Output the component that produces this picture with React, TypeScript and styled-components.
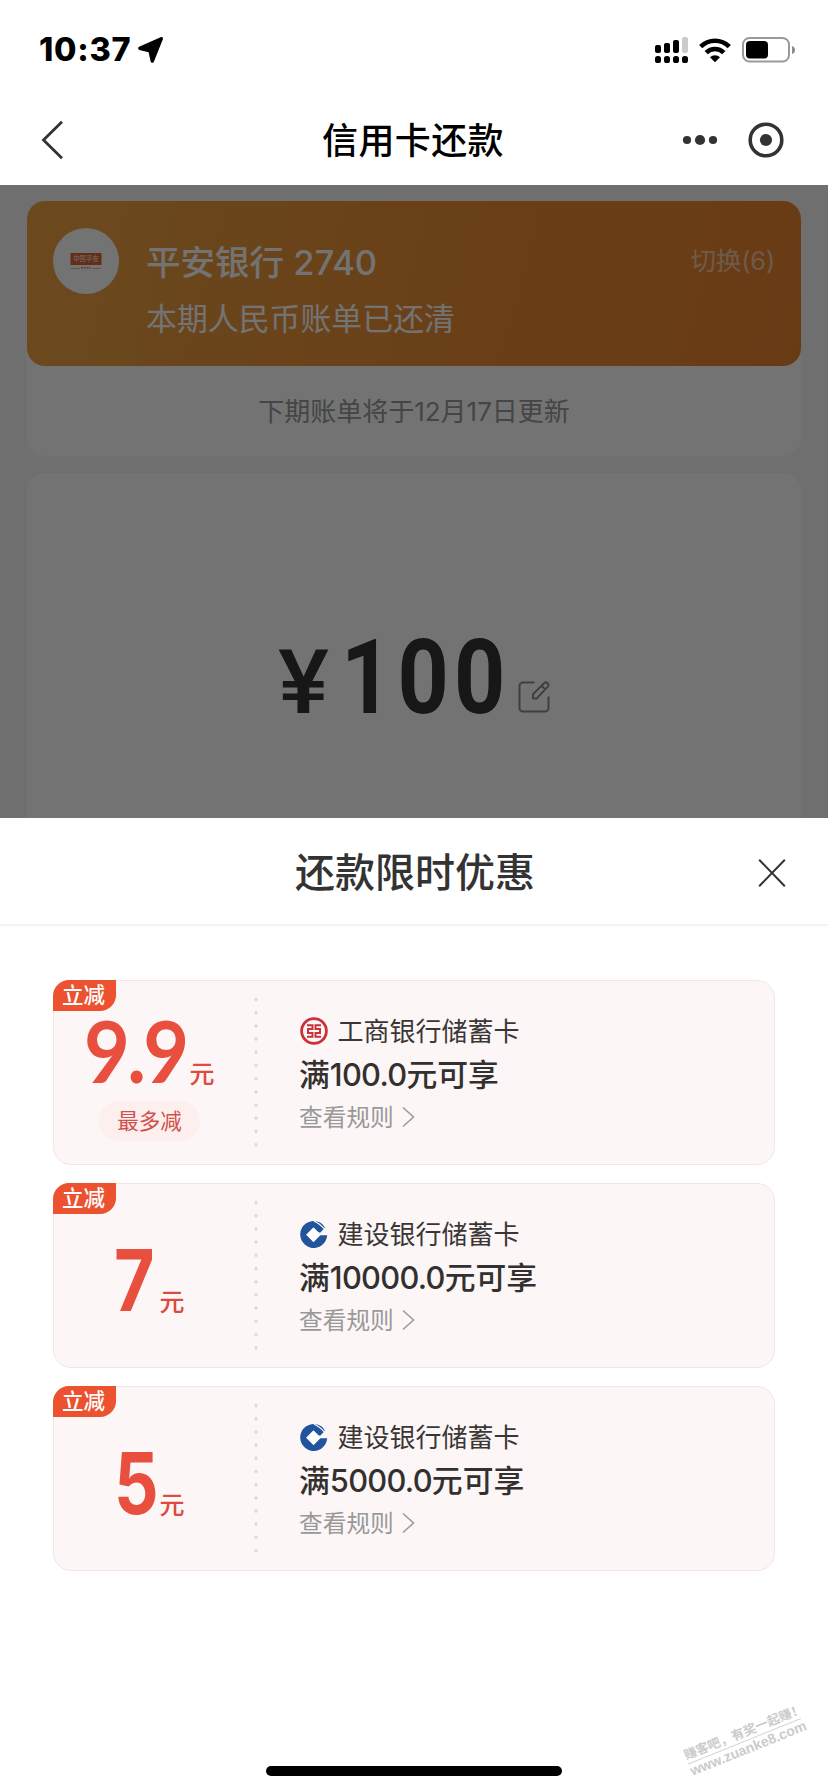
import React from 'react';
import styled, { createGlobalStyle } from 'styled-components';

const GlobalStyle = createGlobalStyle`
  * { box-sizing: border-box; }
  body {
    margin: 0;
    background: #fff;
    font-family: Inter, 'Noto Sans CJK SC', sans-serif;
    color: #333;
  }
`;

const Page = styled.div`
  position: relative;
  display: flex;
  flex-direction: column;
  width: 828px;
  height: 1792px;
  overflow: hidden;
  background: #fff;
`;

const StatusBar = styled.div`
  display: flex;
  align-items: center;
  height: 95px;
  padding: 5px 33px 0 39px;
  color: #000;
`;

const Clock = styled.span`
  width: 98px;
  font-size: 32.5px;
  font-weight: 780;
  line-height: 40px;
  letter-spacing: 0.7px;
  white-space: nowrap;
`;

const StatusIcons = styled.div`
  display: flex;
  align-items: center;
  gap: 11px;
  margin-left: auto;
`;

const NavBar = styled.div`
  display: grid;
  grid-template-columns: 1fr auto 1fr;
  align-items: center;
  height: 90px;
  padding: 0 44px 0 40px;
`;

const NavTitle = styled.h1`
  margin: 0;
  padding: 2px 0 0 2px;
  color: #000;
  font-size: 36px;
  font-weight: 500;
  line-height: 50px;
  letter-spacing: 0.4px;
`;

const NavActions = styled.div`
  display: flex;
  align-items: center;
  justify-content: flex-end;
  gap: 30px;
`;

const Backdrop = styled.div`
  position: relative;
  flex: none;
  height: 633px;
  padding: 16px 27px 0;
  overflow: hidden;
  background: #f5f5f5;
`;

const Mask = styled.div`
  position: absolute;
  inset: 0;
  background: rgba(0, 0, 0, 0.55);
`;

const BillCard = styled.div`
  height: 255px;
  border-radius: 18px;
  background: #fff;
`;

const BankPanel = styled.div`
  display: flex;
  height: 165px;
  padding: 27px 26px 0;
  border-radius: 18px;
  background: linear-gradient(105deg, #eea443 0%, #ea8f36 50%, #e98330 100%);
  color: #fff;
`;

const BankBadge = styled.div`
  display: flex;
  align-items: center;
  justify-content: center;
  width: 66px;
  height: 66px;
  margin-right: 27px;
  border-radius: 50%;
  background: #fff;
`;

const BankInfo = styled.div`
  display: flex;
  flex-direction: column;
`;

const BankName = styled.div`
  height: 60px;
  font-size: 34.5px;
  font-weight: 500;
  line-height: 69px;
  white-space: pre;
`;

const CardTail = styled.span`
  font-weight: 450;
`;

const BillStatus = styled.div`
  font-size: 30.9px;
  line-height: 61px;
`;

const SwitchLink = styled.div`
  margin-left: auto;
  font-size: 25.5px;
  line-height: 66px;
  letter-spacing: -0.2px;
  opacity: 0.55;
`;

const NextBill = styled.div`
  color: #999;
  font-size: 26px;
  line-height: 91px;
  text-align: center;
`;

const AmountCard = styled.div`
  display: flex;
  align-items: flex-start;
  justify-content: center;
  height: 420px;
  margin-top: 17px;
  padding-top: 155px;
  border-radius: 18px;
  background: #fff;
`;

const AmountLine = styled.div`
  display: flex;
  align-items: baseline;
  color: #333;
  font-family: Roboto, sans-serif;
  font-weight: 700;
  line-height: 100px;
`;

const Yen = styled.span`
  width: 63px;
  font-size: 89px;
  font-weight: 500;
  transform: scaleX(1.08);
  transform-origin: left;
`;

const Amount = styled.span`
  width: 177px;
  font-size: 104px;
  letter-spacing: 6px;
  transform: scaleX(0.86);
  transform-origin: left;
`;

const Sheet = styled.div`
  display: flex;
  flex-direction: column;
  flex: 1;
  background: #fff;
`;

const SheetHeader = styled.div`
  display: grid;
  grid-template-columns: 1fr auto 1fr;
  align-items: center;
  height: 108px;
  padding: 4px 42px 0 43px;
  border-bottom: 2px solid #f3f3f3;
`;

const SheetTitle = styled.h2`
  grid-column: 2;
  margin: 0;
  padding-left: 1px;
  font-size: 40px;
  font-weight: 500;
  line-height: 58px;
`;

const CloseSlot = styled.div`
  display: flex;
  justify-content: flex-end;
`;

const CouponList = styled.div`
  display: flex;
  flex-direction: column;
  gap: 18px;
  padding: 54px 53px 0;
`;

const Coupon = styled.div`
  position: relative;
  display: flex;
  height: 185px;
  border: 1px solid #f5e4e4;
  border-radius: 18px;
  background: #fcf6f6;
`;

const Tag = styled.div`
  position: absolute;
  top: -1px;
  left: -1px;
  width: 63px;
  height: 31px;
  padding-right: 2px;
  border-radius: 16px 0 16px 0;
  background: #ec5130;
  color: #fff;
  font-size: 21.5px;
  font-weight: 500;
  line-height: 31px;
  text-align: center;
`;

const Discount = styled.div`
  display: flex;
  flex-direction: column;
  align-items: center;
  width: 191px;
`;

const DiscountLine = styled.div<{ $top: number }>`
  display: flex;
  align-items: baseline;
  height: 62px;
  margin-top: ${(p) => p.$top}px;
  color: #e94f3f;
  line-height: 62px;
`;

const Figure = styled.span<{ $width: number; $decimal?: boolean }>`
  width: ${(p) => p.$width}px;
  font-family: ${(p) => (p.$decimal ? 'Lato' : 'Inter')}, sans-serif;
  font-size: ${(p) => (p.$decimal ? 86 : 85)}px;
  font-weight: 700;
  letter-spacing: ${(p) => (p.$decimal ? -3 : 0)}px;
  white-space: nowrap;

  span {
    display: inline-block;
    transform: scaleX(${(p) => (p.$decimal ? 0.92 : 0.82)});
    transform-origin: left;
  }
`;

const Unit = styled.span`
  color: #dc4a40;
  font-size: 25px;
  font-weight: 500;
`;

const Limit = styled.div`
  width: 101px;
  height: 40px;
  margin-top: 20px;
  border-radius: 20px;
  background: #fdefee;
  color: #d0504a;
  font-size: 21.5px;
  line-height: 41px;
  text-align: center;
`;

const Perforation = styled.div`
  align-self: center;
  width: 4px;
  height: 158.4px;
  margin-left: 9px;
  background: radial-gradient(circle at center, #ddd6d6 1.2px, transparent 2px) 0 0 / 4px 13.2px;
`;

const Details = styled.div`
  display: flex;
  flex-direction: column;
  margin-left: 41px;
  padding-top: 29px;
`;

const CardName = styled.div`
  display: flex;
  align-items: center;
  gap: 9.5px;
  height: 42px;
  padding-left: 1px;
  color: #3b3636;
  font-size: 26px;

  span {
    padding-bottom: 3px;
  }
`;

const Condition = styled.div`
  height: 45px;
  color: #333030;
  font-size: 30.8px;
  font-weight: 500;
  line-height: 46px;
`;

const Threshold = styled.span`
  letter-spacing: -0.7px;
`;

const Rules = styled.div`
  display: flex;
  align-items: center;
  gap: 8px;
  height: 40px;
  color: #999;
  font-size: 23.7px;

  span {
    padding-bottom: 2px;
  }
`;

const HomeIndicator = styled.div`
  position: absolute;
  bottom: 16px;
  left: 266px;
  width: 296px;
  height: 10px;
  border-radius: 5px;
  background: #000;
`;

const Watermark = styled.div`
  position: absolute;
  right: 23px;
  bottom: 35px;
  width: 122px;
  color: #cbcbcb;
  font-family: 'Liberation Sans', 'Noto Sans CJK SC', sans-serif;
  font-weight: 700;
  text-align: center;
  white-space: nowrap;
  transform: rotate(-22deg);
`;

const WatermarkTop = styled.div`
  border-bottom: 1px solid #d4d4d4;
  font-size: 12.8px;
  line-height: 17px;
`;

const WatermarkUrl = styled.div`
  font-size: 14px;
  line-height: 15px;
`;

const LocationIcon = () => (
  <svg width="28" height="28" viewBox="0 0 28 28">
    <path
      d="M24.3 2.7 2.8 12.4 13 14.9 15.3 25Z"
      fill="#000"
      stroke="#000"
      strokeWidth="3.4"
      strokeLinejoin="round"
    />
  </svg>
);

const SignalIcon = () => (
  <svg width="33" height="26" viewBox="0 0 33 26">
    <rect x="0" y="8" width="6" height="8" rx="2" />
    <rect x="9" y="6" width="6" height="10" rx="2" />
    <rect x="18" y="3" width="6" height="13" rx="2" />
    <rect x="27" y="0" width="6" height="16" rx="2" fill="#cbcbcb" />
    {[0, 9, 18, 27].map((x) => (
      <rect key={x} x={x} y="19" width="6" height="7" rx="2.6" />
    ))}
  </svg>
);

const WifiIcon = () => (
  <svg width="32" height="25" viewBox="0 0 32 25">
    <g fill="none" stroke="#000" strokeWidth="4.6">
      <path d="M1.7 8.6a20.3 20.3 0 0 1 28.6 0" />
      <path d="M7.2 14.6a12.5 12.5 0 0 1 17.6 0" />
    </g>
    <path d="M16 24.2 11 19.2a7.2 7.2 0 0 1 10 0Z" />
  </svg>
);

const BatteryIcon = () => (
  <svg width="53" height="26" viewBox="0 0 53 26">
    <rect x="1" y="1" width="46" height="23.5" rx="6.5" fill="none" stroke="#9a9a9a" strokeWidth="2" />
    <rect x="4" y="4" width="22" height="17.5" rx="4" />
    <path d="M50 9q3 1 3 4t-3 4Z" fill="#8c8c8c" />
  </svg>
);

const BackIcon = () => (
  <svg width="24" height="40" viewBox="0 0 24 40">
    <path d="M22 1.8 3.5 20 22 38.2" fill="none" stroke="#333" strokeWidth="2.8" />
  </svg>
);

const MoreIcon = () => (
  <svg width="36" height="12" viewBox="0 0 36 12" fill="#333">
    <circle cx="5" cy="6" r="4.1" />
    <circle cx="18" cy="6" r="5.1" />
    <circle cx="31" cy="6" r="4.1" />
  </svg>
);

const TargetIcon = () => (
  <svg width="36" height="36" viewBox="0 0 36 36">
    <circle cx="18" cy="18" r="15.8" fill="none" stroke="#333" strokeWidth="3.6" />
    <circle cx="18" cy="18" r="6.1" fill="#333" />
  </svg>
);

const PinganLogo = () => (
  <svg width="34" height="20" viewBox="0 0 34 20">
    <rect x="1.5" y="2" width="31" height="12" fill="#dc6433" />
    <text x="17" y="10.4" textAnchor="middle" fontSize="6.4" fontWeight="700" fill="#f6cdb8">
      中国平安
    </text>
    <path d="M2 17.5h9m12 0h9" stroke="#eba68c" strokeWidth="0.8" />
    <path d="M12 16.8h10" stroke="#dd8a70" strokeWidth="1.4" strokeDasharray="2 0.8" />
  </svg>
);

const EditIcon = () => (
  <svg width="32" height="32" viewBox="0 0 32 32" fill="none" stroke="#8d8d8d" strokeWidth="2">
    <path d="M16.5 1.5H5A3.5 3.5 0 0 0 1.5 5v22A3.5 3.5 0 0 0 5 30.5h22a3.5 3.5 0 0 0 3.5-3.5V15.5" />
    <path d="M15 17.5v-4.2L26 2.3a2.5 2.5 0 0 1 3.6 3.6L18.6 17.5ZM23.5 4.8l3.6 3.6" strokeLinejoin="round" />
  </svg>
);

const CloseIcon = () => (
  <svg width="28" height="30" viewBox="0 0 28 30">
    <path d="M1.2 1.8 26.8 28.2M26.8 1.8 1.2 28.2" stroke="#333" strokeWidth="2" />
  </svg>
);

const IcbcLogo = () => (
  <svg width="28" height="28" viewBox="0 0 28 28" fill="none" stroke="#c8323a">
    <circle cx="14" cy="14" r="12.4" strokeWidth="2.8" />
    <path
      d="M7 8.3H12.5V12H8V16H12.5V19.7H7M21 8.3H15.5V12H20V16H15.5V19.7H21"
      strokeWidth="2"
    />
  </svg>
);

const CcbLogo = () => (
  <svg width="28" height="28" viewBox="0 0 28 28">
    <path
      d="M22.5 4.2A13.5 13.5 0 1 0 27.2 15.3H20.2L13.5 22 6.3 14.7 13.5 7.5l5 5h1.9l4.5-4.8Z"
      fill="#22549e"
    />
    <path d="M6.3 14.7 13.5 7.5l7.2 7.2-7.2 7.2Z" fill="#fff" />
    <path d="M14 1.2q5.5 2 10.5 8" fill="none" stroke="#fff" strokeWidth="1.2" />
  </svg>
);

const ChevronIcon = () => (
  <svg width="13" height="22" viewBox="0 0 13 22">
    <path d="M1 1.5 11.5 11 1 20.5" fill="none" stroke="#999" strokeWidth="1.5" />
  </svg>
);

type CouponData = {
  value: string;
  width: number;
  capped?: boolean;
  bank: 'icbc' | 'ccb';
  name: string;
  threshold: string;
};

const coupons: CouponData[] = [
  { value: '9.9', width: 105, capped: true, bank: 'icbc', name: '工商银行储蓄卡', threshold: '100.0' },
  { value: '7', width: 45, bank: 'ccb', name: '建设银行储蓄卡', threshold: '10000.0' },
  { value: '5', width: 45, bank: 'ccb', name: '建设银行储蓄卡', threshold: '5000.0' },
];

const CouponItem = ({ value, width, capped, bank, name, threshold }: CouponData) => (
  <Coupon>
    <Tag>立减</Tag>
    <Discount>
      <DiscountLine $top={capped ? 38 : 66}>
        <Figure $width={width} $decimal={value.includes('.')}>
          <span>{value}</span>
        </Figure>
        <Unit>元</Unit>
      </DiscountLine>
      {capped && <Limit>最多减</Limit>}
    </Discount>
    <Perforation />
    <Details>
      <CardName>
        {bank === 'icbc' ? <IcbcLogo /> : <CcbLogo />}
        <span>{name}</span>
      </CardName>
      <Condition>
        满<Threshold>{threshold}</Threshold>元可享
      </Condition>
      <Rules>
        <span>查看规则</span>
        <ChevronIcon />
      </Rules>
    </Details>
  </Coupon>
);

export default function App() {
  return (
    <>
      <GlobalStyle />
      <Page>
        <StatusBar>
          <Clock>10:37</Clock>
          <LocationIcon />
          <StatusIcons>
            <SignalIcon />
            <WifiIcon />
            <BatteryIcon />
          </StatusIcons>
        </StatusBar>
        <NavBar>
          <BackIcon />
          <NavTitle>信用卡还款</NavTitle>
          <NavActions>
            <MoreIcon />
            <TargetIcon />
          </NavActions>
        </NavBar>
        <Backdrop>
          <BillCard>
            <BankPanel>
              <BankBadge>
                <PinganLogo />
              </BankBadge>
              <BankInfo>
                <BankName>
                  平安银行 <CardTail>2740</CardTail>
                </BankName>
                <BillStatus>本期人民币账单已还清</BillStatus>
              </BankInfo>
              <SwitchLink>切换(6)</SwitchLink>
            </BankPanel>
            <NextBill>下期账单将于12月17日更新</NextBill>
          </BillCard>
          <AmountCard>
            <AmountLine>
              <Yen>¥</Yen>
              <Amount>100</Amount>
              <EditIcon />
            </AmountLine>
          </AmountCard>
          <Mask />
        </Backdrop>
        <Sheet>
          <SheetHeader>
            <SheetTitle>还款限时优惠</SheetTitle>
            <CloseSlot>
              <CloseIcon />
            </CloseSlot>
          </SheetHeader>
          <CouponList>
            {coupons.map((c) => (
              <CouponItem key={c.threshold} {...c} />
            ))}
          </CouponList>
        </Sheet>
        <Watermark>
          <WatermarkTop>赚客吧，有奖一起赚！</WatermarkTop>
          <WatermarkUrl>www.zuanke8.com</WatermarkUrl>
        </Watermark>
        <HomeIndicator />
      </Page>
    </>
  );
}
